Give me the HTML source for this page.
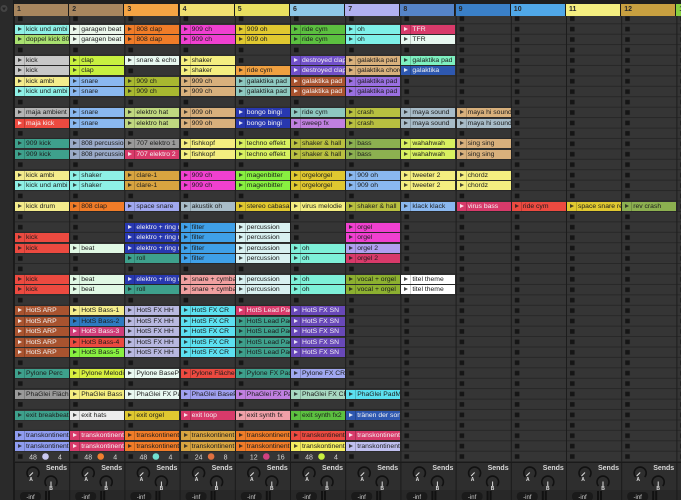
<!DOCTYPE html>
<html><head><meta charset="utf-8"><style>
*{margin:0;padding:0;box-sizing:border-box}
body{width:681px;height:500px;overflow:hidden;background:#262626;font-family:"Liberation Sans",sans-serif;position:relative}
#grid{position:absolute;left:0;top:0}
.h{position:absolute;top:4px;height:12px;width:55px;font-size:7px;font-weight:bold;color:#2a2a2a;padding:2px 0 0 3px;border-right:1px solid #1a1a1a}
.c{position:absolute;height:9px;width:54px;font-size:6.8px;line-height:9px;color:#1c1c1c;padding-left:11px;white-space:nowrap;overflow:hidden}
.c::before{content:"";position:absolute;left:3px;top:2px;border-left:4px solid rgba(30,30,30,.8);border-top:2.5px solid transparent;border-bottom:2.5px solid transparent}
.c::after{content:"";position:absolute;left:9px;top:0;width:1px;height:9px;background:rgba(0,0,0,.18)}
.w{color:#f2f2f2}.w::before{border-left-color:rgba(255,255,255,.85)}
.k1{left:15px}.k2{left:70.2px}.k3{left:125.4px}.k4{left:180.6px}.k5{left:235.8px}.k6{left:291px}.k7{left:346.2px}.k8{left:401.4px}.k9{left:456.6px}.k10{left:511.8px}.k11{left:567px}.k12{left:622.2px}
.r1{top:24.7px}.r2{top:35.2px}.r4{top:56px}.r5{top:66.4px}.r6{top:76.9px}.r7{top:87.3px}.r9{top:108.1px}.r10{top:118.6px}.r12{top:139.4px}.r13{top:149.8px}.r15{top:170.7px}.r16{top:181.1px}.r18{top:202px}.r20{top:222.8px}.r21{top:233.2px}.r22{top:243.7px}.r23{top:254.1px}.r25{top:274.9px}.r26{top:285.4px}.r28{top:306.2px}.r29{top:316.6px}.r30{top:327.1px}.r31{top:337.5px}.r32{top:347.9px}.r34{top:368.8px}.r36{top:389.6px}.r38{top:410.5px}.r40{top:431.3px}.r41{top:441.7px}
</style></head><body>
<svg id="grid" width="681" height="500">
<defs>
<pattern id="slot" x="14" y="13.8" width="55.2" height="10.425" patternUnits="userSpaceOnUse">
<rect width="55.2" height="10.425" fill="#353535"/>
<rect y="9.6" width="55.2" height="0.9" fill="#242424"/>
<rect width="1" height="10.425" fill="#1c1c1c"/>
<rect x="4" y="2.6" width="4.6" height="4.6" fill="#151515"/>
</pattern>
<g id="snd">
<path d="M14.5 477 A6 6 0 1 1 23.5 477" fill="none" stroke="#111" stroke-width="1.6"/>
<line x1="19" y1="472.5" x2="15.5" y2="476" stroke="#ddd" stroke-width="1"/>
<path d="M32.5 486 A6 6 0 1 1 41.5 486" fill="none" stroke="#111" stroke-width="1.6"/>
<line x1="37" y1="481.5" x2="37" y2="486.5" stroke="#ddd" stroke-width="1"/>
<rect x="6" y="492" width="21" height="9" rx="4" fill="#1a1a1a"/>
<rect x="31" y="491" width="2" height="9" fill="#111"/><rect x="34" y="491" width="2" height="9" fill="#111"/>
</g>
</defs>
<rect x="0" y="0" width="681" height="4" fill="#1e1e1e"/>
<rect x="0" y="0" width="14" height="500" fill="#2a2a2a"/>
<rect x="13" y="0" width="1" height="500" fill="#1a1a1a"/>
<circle cx="4" cy="8.5" r="3.5" fill="#444"/><path d="M2 7.5 L6 7.5 L4 10.5Z" fill="#222"/>
<rect x="14" y="13.8" width="667" height="448" fill="url(#slot)"/>
<rect x="14" y="462" width="667" height="38" fill="#2e2e2e"/>
<rect x="14" y="462" width="667" height="1" fill="#1a1a1a"/>
<rect x="14" y="490" width="667" height="10" fill="#282828"/>
<g fill="#1a1a1a">
<rect x="14" y="462" width="1" height="38"/><rect x="69.2" y="462" width="1" height="38"/><rect x="124.4" y="462" width="1" height="38"/><rect x="179.6" y="462" width="1" height="38"/><rect x="234.8" y="462" width="1" height="38"/><rect x="290" y="462" width="1" height="38"/><rect x="345.2" y="462" width="1" height="38"/><rect x="400.4" y="462" width="1" height="38"/><rect x="455.6" y="462" width="1" height="38"/><rect x="510.8" y="462" width="1" height="38"/><rect x="566" y="462" width="1" height="38"/><rect x="621.2" y="462" width="1" height="38"/><rect x="676.4" y="462" width="1" height="38"/>
</g>
<use href="#snd" x="14"/><use href="#snd" x="69.2"/><use href="#snd" x="124.4"/><use href="#snd" x="179.6"/><use href="#snd" x="234.8"/><use href="#snd" x="290"/><use href="#snd" x="345.2"/><use href="#snd" x="400.4"/><use href="#snd" x="455.6"/><use href="#snd" x="510.8"/><use href="#snd" x="566"/><use href="#snd" x="621.2"/>
<g font-size="7" font-weight="bold" fill="#d8d8d8" font-family="Liberation Sans, sans-serif">
<text x="46" y="470">Sends</text><text x="101.2" y="470">Sends</text><text x="156.4" y="470">Sends</text><text x="211.6" y="470">Sends</text><text x="266.8" y="470">Sends</text><text x="322" y="470">Sends</text><text x="377.2" y="470">Sends</text><text x="432.4" y="470">Sends</text><text x="487.6" y="470">Sends</text><text x="542.8" y="470">Sends</text><text x="598" y="470">Sends</text><text x="653.2" y="470">Sends</text>
</g>
<g font-size="5" font-weight="bold" fill="#ddd" font-family="Liberation Sans, sans-serif" text-anchor="middle">
<text x="31" y="481">A</text><text x="51" y="490">B</text>
<text x="86.2" y="481">A</text><text x="106.2" y="490">B</text>
<text x="141.4" y="481">A</text><text x="161.4" y="490">B</text>
<text x="196.6" y="481">A</text><text x="216.6" y="490">B</text>
<text x="251.8" y="481">A</text><text x="271.8" y="490">B</text>
<text x="307" y="481">A</text><text x="327" y="490">B</text>
<text x="362.2" y="481">A</text><text x="382.2" y="490">B</text>
<text x="417.4" y="481">A</text><text x="437.4" y="490">B</text>
<text x="472.6" y="481">A</text><text x="492.6" y="490">B</text>
<text x="527.8" y="481">A</text><text x="547.8" y="490">B</text>
<text x="583" y="481">A</text><text x="603" y="490">B</text>
<text x="638.2" y="481">A</text><text x="658.2" y="490">B</text>
</g>
<g font-size="6" fill="#ccc" font-family="Liberation Sans, sans-serif" text-anchor="middle">
<text x="30.5" y="499">-inf</text><text x="85.7" y="499">-inf</text><text x="140.9" y="499">-inf</text><text x="196.1" y="499">-inf</text><text x="251.3" y="499">-inf</text><text x="306.5" y="499">-inf</text><text x="361.7" y="499">-inf</text><text x="416.9" y="499">-inf</text><text x="472.1" y="499">-inf</text><text x="527.3" y="499">-inf</text><text x="582.5" y="499">-inf</text><text x="637.7" y="499">-inf</text>
</g>
<g font-size="7" fill="#d8d8d8" font-family="Liberation Sans, sans-serif" text-anchor="middle">
<text x="33" y="459.5">48</text><text x="60" y="459.5">4</text>
<text x="88.2" y="459.5">48</text><text x="115.2" y="459.5">4</text>
<text x="143.4" y="459.5">48</text><text x="170.4" y="459.5">4</text>
<text x="198.6" y="459.5">24</text><text x="225.6" y="459.5">8</text>
<text x="253.8" y="459.5">12</text><text x="280.8" y="459.5">16</text>
<text x="309" y="459.5">48</text><text x="336" y="459.5">4</text>
</g>
<circle cx="45.5" cy="456.5" r="3.3" fill="#c8c8f0"/><circle cx="100.7" cy="456.5" r="3.3" fill="#f08030"/><circle cx="155.9" cy="456.5" r="3.3" fill="#70e0d0"/><circle cx="211.1" cy="456.5" r="3.3" fill="#e07040"/><circle cx="266.3" cy="456.5" r="3.3" fill="#d04080"/><circle cx="321.5" cy="456.5" r="3.3" fill="#c8f040"/>
</svg>
<div class="h" style="left:14px;background:#a8865e">1</div>
<div class="h" style="left:69.2px;background:#a8865e">2</div>
<div class="h" style="left:124.4px;background:#f4a444">3</div>
<div class="h" style="left:179.6px;background:#f0e070">4</div>
<div class="h" style="left:234.8px;background:#e8e060">5</div>
<div class="h" style="left:290px;background:#8ec8e8">6</div>
<div class="h" style="left:345.2px;background:#b0b0f0">7</div>
<div class="h" style="left:400.4px;background:#5584c8">8</div>
<div class="h" style="left:455.6px;background:#3a80c8">9</div>
<div class="h" style="left:510.8px;background:#50a8e8">10</div>
<div class="h" style="left:566px;background:#f4ee80">11</div>
<div class="h" style="left:621.2px;background:#c8a040">12</div>
<div class="h" style="left:676.4px;background:#88d040">13</div>

<div class="c k1 r1" style="background:#8ef0e6">kick und ambi</div>
<div class="c k1 r2" style="background:#a8e070">doppel kick 808</div>
<div class="c k1 r4" style="background:#c8c8c8">kick</div>
<div class="c k1 r5" style="background:#c8c8c8">kick</div>
<div class="c k1 r6" style="background:#f4ec8c">kick ambi</div>
<div class="c k1 r7" style="background:#8ef0e6">kick und ambi</div>
<div class="c k1 r9" style="background:#b4b4b4">maja ambient k</div>
<div class="c k1 r10 w" style="background:#ec4a40">maja kick</div>
<div class="c k1 r12" style="background:#3ea08c">909 kick</div>
<div class="c k1 r13" style="background:#3ea08c">909 kick</div>
<div class="c k1 r15" style="background:#f4ec8c">kick ambi</div>
<div class="c k1 r16" style="background:#8ef0e6">kick und ambi</div>
<div class="c k1 r18" style="background:#f4ec8c">kick drum</div>
<div class="c k1 r21" style="background:#ec4a40">kick</div>
<div class="c k1 r22" style="background:#ec4a40">kick</div>
<div class="c k1 r25" style="background:#ec4a40">kick</div>
<div class="c k1 r26" style="background:#ec4a40">kick</div>
<div class="c k1 r28 w" style="background:#a8532f">HotS ARP</div>
<div class="c k1 r29 w" style="background:#a8532f">HotS ARP</div>
<div class="c k1 r30 w" style="background:#a8532f">HotS ARP</div>
<div class="c k1 r31 w" style="background:#a8532f">HotS ARP</div>
<div class="c k1 r32 w" style="background:#a8532f">HotS ARP</div>
<div class="c k1 r34" style="background:#3ea08c">Pylone Perc</div>
<div class="c k1 r36" style="background:#9a9a9a">PhaGlei Fläche</div>
<div class="c k1 r38" style="background:#3ea08c">exit breakbeat</div>
<div class="c k1 r40" style="background:#8f9cf0">transkontinent</div>
<div class="c k1 r41" style="background:#8f9cf0">transkontinent</div>

<div class="c k2 r1" style="background:#eaf6ea">garagen beat</div>
<div class="c k2 r2" style="background:#eaf6ea">garagen beat</div>
<div class="c k2 r4" style="background:#c8f040">clap</div>
<div class="c k2 r5" style="background:#c8f040">clap</div>
<div class="c k2 r6" style="background:#8ab8f0">snare</div>
<div class="c k2 r7" style="background:#8ab8f0">snare</div>
<div class="c k2 r9" style="background:#8ab8f0">snare</div>
<div class="c k2 r10" style="background:#8ab8f0">snare</div>
<div class="c k2 r12" style="background:#9aaac8">808 percussion</div>
<div class="c k2 r13" style="background:#9aaac8">808 percussion</div>
<div class="c k2 r15" style="background:#8ef0e6">shaker</div>
<div class="c k2 r16" style="background:#8ef0e6">shaker</div>
<div class="c k2 r18" style="background:#f07c28">808 clap</div>
<div class="c k2 r22" style="background:#e0f8e4">beat</div>
<div class="c k2 r25" style="background:#e0f8e4">beat</div>
<div class="c k2 r26" style="background:#e0f8e4">beat</div>
<div class="c k2 r28" style="background:#f4ec8c">HotS Bass-1</div>
<div class="c k2 r29" style="background:#2e7ac0">HotS Bass-2</div>
<div class="c k2 r30 w" style="background:#d03c78">HotS Bass-3</div>
<div class="c k2 r31" style="background:#ec4a40">HotS Bass-4</div>
<div class="c k2 r32" style="background:#88f040">HotS Bass-5</div>
<div class="c k2 r34" style="background:#d8f040">Pylone Melodie</div>
<div class="c k2 r36" style="background:#f4ee80">PhaGlei Bass</div>
<div class="c k2 r38" style="background:#ececec">exit hats</div>
<div class="c k2 r40 w" style="background:#d83a6a">transkontinent</div>
<div class="c k2 r41 w" style="background:#d83a6a">transkontinent</div>

<div class="c k3 r1" style="background:#f07c28">808 clap</div>
<div class="c k3 r2" style="background:#f07c28">808 clap</div>
<div class="c k3 r4" style="background:#e8f8f0">snare &amp; echo</div>
<div class="c k3 r6" style="background:#a8b830">909 ch</div>
<div class="c k3 r7" style="background:#a8b830">909 ch</div>
<div class="c k3 r9" style="background:#c0d880">elektro hat</div>
<div class="c k3 r10" style="background:#c0d880">elektro hat</div>
<div class="c k3 r12" style="background:#9a9a9a">707 elektro 1</div>
<div class="c k3 r13 w" style="background:#d83a6a">707 elektro 2</div>
<div class="c k3 r15" style="background:#d8a440">clare-1</div>
<div class="c k3 r16" style="background:#d8a440">clare-1</div>
<div class="c k3 r18" style="background:#a0a8f0">space snare</div>
<div class="c k3 r20 w" style="background:#2838b0">elektro + ring m</div>
<div class="c k3 r21 w" style="background:#2838b0">elektro + ring m</div>
<div class="c k3 r22 w" style="background:#2838b0">elektro + ring m</div>
<div class="c k3 r23" style="background:#3ea08c">roll</div>
<div class="c k3 r25 w" style="background:#2838b0">elektro + ring m</div>
<div class="c k3 r26" style="background:#3ea08c">roll</div>
<div class="c k3 r28" style="background:#b8b8e0">HotS FX HH</div>
<div class="c k3 r29" style="background:#b8b8e0">HotS FX HH</div>
<div class="c k3 r30" style="background:#b8b8e0">HotS FX HH</div>
<div class="c k3 r31" style="background:#b8b8e0">HotS FX HH</div>
<div class="c k3 r32" style="background:#b8b8e0">HotS FX HH</div>
<div class="c k3 r34" style="background:#e8f8f0">Pylone BasePerc</div>
<div class="c k3 r36" style="background:#e8f8f0">PhaGlei FX Pad</div>
<div class="c k3 r38" style="background:#e0c830">exit orgel</div>
<div class="c k3 r40" style="background:#f07c28">transkontinent</div>
<div class="c k3 r41" style="background:#f07c28">transkontinent</div>

<div class="c k4 r1" style="background:#f040d0">909 ch</div>
<div class="c k4 r2" style="background:#f040d0">909 ch</div>
<div class="c k4 r4" style="background:#f4ee80">shaker</div>
<div class="c k4 r5" style="background:#f4ee80">shaker</div>
<div class="c k4 r6" style="background:#d8b07c">909 ch</div>
<div class="c k4 r7" style="background:#d8b07c">909 ch</div>
<div class="c k4 r9" style="background:#d8b07c">909 oh</div>
<div class="c k4 r10" style="background:#d8b07c">909 oh</div>
<div class="c k4 r12" style="background:#f4ee80">fishkopf</div>
<div class="c k4 r13" style="background:#f4ee80">fishkopf</div>
<div class="c k4 r15" style="background:#f040d0">909 ch</div>
<div class="c k4 r16" style="background:#f040d0">909 ch</div>
<div class="c k4 r18" style="background:#a8bcc8">akustik oh</div>
<div class="c k4 r20" style="background:#3fa0e8">filter</div>
<div class="c k4 r21" style="background:#3fa0e8">filter</div>
<div class="c k4 r22" style="background:#3fa0e8">filter</div>
<div class="c k4 r23" style="background:#3fa0e8">filter</div>
<div class="c k4 r25" style="background:#f0a0a0">snare + cymbal</div>
<div class="c k4 r26" style="background:#f0a0a0">snare + cymbal</div>
<div class="c k4 r28" style="background:#5ce0f0">HotS FX CR</div>
<div class="c k4 r29" style="background:#5ce0f0">HotS FX CR</div>
<div class="c k4 r30" style="background:#5ce0f0">HotS FX CR</div>
<div class="c k4 r31" style="background:#5ce0f0">HotS FX CR</div>
<div class="c k4 r32" style="background:#5ce0f0">HotS FX CR</div>
<div class="c k4 r34" style="background:#ec4a40">Pylone Fläche</div>
<div class="c k4 r36" style="background:#a0a0f0">PhaGlei BasePe</div>
<div class="c k4 r38 w" style="background:#d83a6a">exit loop</div>
<div class="c k4 r40" style="background:#d8a440">transkontinent</div>
<div class="c k4 r41" style="background:#d8a440">transkontinent</div>

<div class="c k5 r1" style="background:#e0c830">909 oh</div>
<div class="c k5 r2" style="background:#e0c830">909 oh</div>
<div class="c k5 r5" style="background:#f0a040">ride cym</div>
<div class="c k5 r6" style="background:#8ec8c0">galaktika pad</div>
<div class="c k5 r7" style="background:#8ec8c0">galaktika pad</div>
<div class="c k5 r9 w" style="background:#2838b0">bongo bingi</div>
<div class="c k5 r10 w" style="background:#2838b0">bongo bingi</div>
<div class="c k5 r12" style="background:#d8f060">techno effekt</div>
<div class="c k5 r13" style="background:#d8f060">techno effekt</div>
<div class="c k5 r15" style="background:#88f040">magenbitter</div>
<div class="c k5 r16" style="background:#88f040">magenbitter</div>
<div class="c k5 r18" style="background:#e0c830">stereo cabasa</div>
<div class="c k5 r20" style="background:#d8f0f0">percussion</div>
<div class="c k5 r21" style="background:#d8f0f0">percussion</div>
<div class="c k5 r22" style="background:#d8f0f0">percussion</div>
<div class="c k5 r23" style="background:#d8f0f0">percussion</div>
<div class="c k5 r25" style="background:#d8f0f0">percussion</div>
<div class="c k5 r26" style="background:#d8f0f0">percussion</div>
<div class="c k5 r28 w" style="background:#d83a6a">HotS Lead Pad</div>
<div class="c k5 r29" style="background:#3ea08c">HotS Lead Pad</div>
<div class="c k5 r30" style="background:#3ea08c">HotS Lead Pad</div>
<div class="c k5 r31" style="background:#3ea08c">HotS Lead Pad</div>
<div class="c k5 r32" style="background:#3ea08c">HotS Lead Pad</div>
<div class="c k5 r34" style="background:#3ea08c">Pylone FX Pad</div>
<div class="c k5 r36" style="background:#c080e0">PhaGlei FX Pad</div>
<div class="c k5 r38" style="background:#f0a0a8">exit synth fx</div>
<div class="c k5 r40" style="background:#f07c28">transkontinent</div>
<div class="c k5 r41" style="background:#f07c28">transkontinent</div>

<div class="c k6 r1" style="background:#5cc040">ride cym</div>
<div class="c k6 r2" style="background:#5cc040">ride cym</div>
<div class="c k6 r4 w" style="background:#7050c8">destroyed clap</div>
<div class="c k6 r5 w" style="background:#7050c8">destroyed clap</div>
<div class="c k6 r6 w" style="background:#a8522e">galaktika pad</div>
<div class="c k6 r7 w" style="background:#a8522e">galaktika pad</div>
<div class="c k6 r9" style="background:#8ec8c0">ride cym</div>
<div class="c k6 r10" style="background:#c080e0">sweep fx</div>
<div class="c k6 r12" style="background:#b8c040">shaker &amp; hall</div>
<div class="c k6 r13" style="background:#b8c040">shaker &amp; hall</div>
<div class="c k6 r15" style="background:#e0c830">orgelorgel</div>
<div class="c k6 r16" style="background:#e0c830">orgelorgel</div>
<div class="c k6 r18" style="background:#f4ee80">virus melodie</div>
<div class="c k6 r22" style="background:#7ef0d8">oh</div>
<div class="c k6 r23" style="background:#7ef0d8">oh</div>
<div class="c k6 r25" style="background:#7ef0d8">oh</div>
<div class="c k6 r26" style="background:#7ef0d8">oh</div>
<div class="c k6 r28 w" style="background:#6848b8">HotS FX SN</div>
<div class="c k6 r29 w" style="background:#6848b8">HotS FX SN</div>
<div class="c k6 r30 w" style="background:#6848b8">HotS FX SN</div>
<div class="c k6 r31 w" style="background:#6848b8">HotS FX SN</div>
<div class="c k6 r32 w" style="background:#6848b8">HotS FX SN</div>
<div class="c k6 r34" style="background:#a0a8f0">Pylone FX CR</div>
<div class="c k6 r36" style="background:#a8d8c0">PhaGlei FX CR</div>
<div class="c k6 r38" style="background:#5cc040">exit synth fx2</div>
<div class="c k6 r40" style="background:#ec4a40">transkontinent</div>
<div class="c k6 r41" style="background:#f4ee60">transkontinent</div>

<div class="c k7 r1" style="background:#7ef0e8">oh</div>
<div class="c k7 r2" style="background:#7ef0e8">oh</div>
<div class="c k7 r4" style="background:#d8b07c">galaktika pad</div>
<div class="c k7 r5" style="background:#d8b07c">galaktika chord</div>
<div class="c k7 r6" style="background:#9a70e0">galaktika pad</div>
<div class="c k7 r7" style="background:#9a70e0">galaktika pad</div>
<div class="c k7 r9" style="background:#b8c040">crash</div>
<div class="c k7 r10" style="background:#b8c040">crash</div>
<div class="c k7 r12" style="background:#8cb050">bass</div>
<div class="c k7 r13" style="background:#8cb050">bass</div>
<div class="c k7 r15" style="background:#8ab8f0">909 oh</div>
<div class="c k7 r16" style="background:#8ab8f0">909 oh</div>
<div class="c k7 r18" style="background:#b8c040">shaker &amp; hall</div>
<div class="c k7 r20" style="background:#f040d0">orgel</div>
<div class="c k7 r21" style="background:#f040d0">orgel</div>
<div class="c k7 r22" style="background:#b0a0f0">orgel 2</div>
<div class="c k7 r23" style="background:#d83a6a">orgel 2</div>
<div class="c k7 r25" style="background:#8cb030">vocal + orgel</div>
<div class="c k7 r26" style="background:#8cb030">vocal + orgel</div>
<div class="c k7 r36" style="background:#5ce0f0">PhaGlei PadMe</div>
<div class="c k7 r38 w" style="background:#2e58b0">tränen der son</div>
<div class="c k7 r40 w" style="background:#d83a6a">transkontinent</div>
<div class="c k7 r41" style="background:#c0c0f0">transkontinent</div>

<div class="c k8 r1 w" style="background:#d83a6a">TFR</div>
<div class="c k8 r2" style="background:#e8f8f0">TFR</div>
<div class="c k8 r4" style="background:#7ef0c0">galaktika pad</div>
<div class="c k8 r5 w" style="background:#2e58b0">galaktika</div>
<div class="c k8 r9" style="background:#a8bcc8">maya sound</div>
<div class="c k8 r10" style="background:#a8bcc8">maya sound</div>
<div class="c k8 r12" style="background:#d8f060">wahahwah</div>
<div class="c k8 r13" style="background:#d8f060">wahahwah</div>
<div class="c k8 r15" style="background:#f4ee80">tweeter 2</div>
<div class="c k8 r16" style="background:#f4ee80">tweeter 2</div>
<div class="c k8 r18" style="background:#8ab8f0">klack klack</div>
<div class="c k8 r25" style="background:#ffffff">titel theme</div>
<div class="c k8 r26" style="background:#ffffff">titel theme</div>

<div class="c k9 r9" style="background:#d8b07c">maya hi sound</div>
<div class="c k9 r10" style="background:#a8bcc8">maya hi sound</div>
<div class="c k9 r12" style="background:#d8b07c">sing sing</div>
<div class="c k9 r13" style="background:#d8b07c">sing sing</div>
<div class="c k9 r15" style="background:#f4ee80">chordz</div>
<div class="c k9 r16" style="background:#f4ee80">chordz</div>
<div class="c k9 r18 w" style="background:#d83a6a">virus bass</div>
<div class="c k10 r18" style="background:#ec4a40">ride cym</div>
<div class="c k11 r18" style="background:#e0c830">space snare rev</div>
<div class="c k12 r18" style="background:#8cb050">rev crash</div>
</body></html>
